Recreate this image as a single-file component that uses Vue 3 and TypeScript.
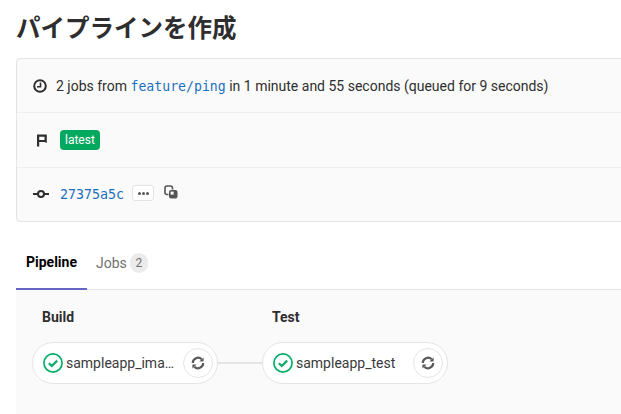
<script setup lang="ts">
interface Job { stage: string; name: string }
const jobs: Job[] = [
  { stage: 'Build', name: 'sampleapp_ima…' },
  { stage: 'Test', name: 'sampleapp_test' },
]
</script>

<template>
  <div class="page">
    <h1 class="title">パイプラインを作成</h1>
    <section class="card">
      <div class="row">
        <svg class="icon clock" viewBox="0 0 14 14" width="14" height="14"><circle cx="7" cy="7" r="5.800" fill="none" stroke="#2e2e2e" stroke-width="2"/><path d="M7.500 3.500V7.800H4" fill="none" stroke="#2e2e2e" stroke-width="1.600"/></svg>
        <span class="text">2 jobs from <code class="link">feature/ping</code> in 1 minute and 55 seconds (queued for 9 seconds)</span>
      </div>
      <div class="row">
        <svg class="icon flag" viewBox="0 0 14 14" width="14" height="14"><path d="M4 13.500V1.500H13.800V10L11.500 9H6.200V13.500z M6.200 3.800V6.900H11.500V3.800z" fill="#2e2e2e" fill-rule="evenodd"/></svg>
        <span class="badge">latest</span>
      </div>
      <div class="row commit">
        <svg class="icon wide" viewBox="0 0 16 16" width="16" height="16"><circle cx="8" cy="8" r="3" fill="none" stroke="#2e2e2e" stroke-width="2"/><path d="M0 8h5M11 8h5" stroke="#2e2e2e" stroke-width="2"/></svg>
        <code class="link sha">27375a5c</code>
        <span class="dots"><i></i><i></i><i></i></span>
        <svg class="copy" viewBox="0 0 14 14" width="14" height="14"><path d="M4.500 9.500H3A2 2 0 0 1 1 7.500V3A2 2 0 0 1 3 1h3.500a2 2 0 0 1 2 2v1.500" fill="none" stroke="#555" stroke-width="1.600"/><rect x="5" y="5" width="8.500" height="8.500" rx="2" fill="#555"/><rect x="6.600" y="6.600" width="3" height="3" fill="#fafafa"/></svg>
      </div>
    </section>
    <nav class="tabs">
      <div class="tab active">Pipeline</div>
      <div class="tab">Jobs <span class="count">2</span></div>
    </nav>
    <section class="graph">
      <div v-for="(job, i) in jobs" :key="job.stage" class="stage">
        <div class="stage-name">{{ job.stage }}</div>
        <div class="job-line">
          <div class="job">
            <svg class="status" viewBox="0 0 20 20" width="20" height="20"><circle cx="10" cy="10" r="9.100" fill="#fff" stroke="#08ad68" stroke-width="1.700"/><path d="M5.800 10.200l3 2.800 5.400-5.400" fill="none" stroke="#08ad68" stroke-width="2.200"/></svg>
            <span class="job-name">{{ job.name }}</span>
            <span class="retry">
              <svg viewBox="0 0 14 14" width="14" height="14"><path d="M1.800 7A5.200 5.200 0 0 1 10.700 3.300M12.200 7A5.200 5.200 0 0 1 3.300 10.700" fill="none" stroke="#5a5a5a" stroke-width="2.200"/><path d="M12.600 1.400V5.600H8.400zM1.400 12.600V8.400H5.600z" fill="#5a5a5a"/></svg>
            </span>
          </div>
          <div v-if="i < jobs.length - 1" class="connector"></div>
        </div>
      </div>
    </section>
  </div>
</template>

<style scoped>
.page {
  width: 621px;
  height: 414px;
  overflow: hidden;
  background: #fff;
  color: #2e2e2e;
  font-family: Roboto, "Noto Sans CJK JP", sans-serif;
  font-size: 14px;
  box-sizing: border-box;
  padding-left: 16px;
}
.title {
  margin: 0;
  height: 58px;
  box-sizing: border-box;
  padding-top: 12px;
  font-size: 24.500px;
  line-height: 34px;
  font-weight: 700;
  color: #2e2e2e;
  font-family: Roboto, "Noto Sans CJK JP", sans-serif;
}
.card {
  width: 640px;
  height: 164px;
  box-sizing: border-box;
  background: #fafafa;
  border: 1px solid #e5e5e5;
  border-radius: 4px;
  display: flex;
  flex-direction: column;
}
.row {
  flex: 1;
  display: flex;
  align-items: center;
  padding-left: 15px;
  border-bottom: 1px solid #eee;
}
.row:last-child { border-bottom: 0; }
.icon { flex: none; margin-left: 1px; }
.clock { margin-right: 9px; }
.flag { margin-right: 13px; }
.wide { margin-right: 11px; }
.text { font-size: 14px; white-space: nowrap; }
.link {
  font-family: "DejaVu Sans Mono", monospace;
  font-size: 13.200px;
  color: #1a70c0;
}
.sha { font-size: 13.300px; }
.badge {
  background: #05a85f;
  color: #fff;
  font-size: 12px;
  line-height: 20px;
  height: 20px;
  padding: 0 5px;
  border-radius: 4px;
  margin-top: 1px;
}
.dots {
  margin-left: 8px;
  width: 22px;
  height: 16px;
  box-sizing: border-box;
  border: 1px solid #e3e3e3;
  border-radius: 3px;
  background: #fff;
  display: flex;
  align-items: center;
  justify-content: center;
  gap: 1px;
  position: relative;
  top: -1px;
}
.dots i { width: 3px; height: 3px; border-radius: 50%; background: #555; }
.copy { margin-left: 10px; position: relative; top: -2px; }
.tabs {
  margin-top: 13px;
  height: 55px;
  box-sizing: border-box;
  width: 640px;
  display: flex;
  border-bottom: 1px solid #e5e5e5;
}
.tab {
  padding: 0 9px;
  height: 55px;
  box-sizing: border-box;
  display: flex;
  align-items: center;
  gap: 3px;
  color: #707070;
  white-space: nowrap;
}
.tab.active {
  width: 71px;
  font-weight: 700;
  color: #000;
  border-bottom: 2px solid #6666c4;
  padding: 0 9px 0 10px;
}
.count {
  width: 18px;
  height: 20px;
  border-radius: 10px;
  background: #ebebeb;
  color: #707070;
  font-size: 12px;
  display: flex;
  align-items: center;
  justify-content: center;
}
.graph {
  width: 640px;
  height: 124px;
  background: #fafafa;
  display: flex;
  padding-left: 16px;
  box-sizing: border-box;
}
.stage { display: flex; flex-direction: column; }
.stage-name {
  font-weight: 700;
  margin-top: 18px;
  margin-left: 10px;
  line-height: 18px;
  color: #2e2e2e;
}
.job-line { display: flex; align-items: center; margin-top: 16px; }
.job {
  width: 186px;
  height: 42px;
  box-sizing: border-box;
  background: #fff;
  border: 1px solid #e5e5e5;
  border-radius: 21px;
  display: flex;
  align-items: center;
  padding: 0 4px 0 10px;
}
.job-name {
  flex: 1;
  margin-left: 3px;
  white-space: nowrap;
  color: #3a3a3a;
}
.status { flex: none; }
.retry {
  width: 30px;
  height: 30px;
  box-sizing: border-box;
  border: 1px solid #e5e5e5;
  border-radius: 50%;
  background: #fff;
  display: flex;
  align-items: center;
  justify-content: center;
}
.connector { width: 44px; height: 2px; background: #e5e5e5; }
</style>

<style>
html, body { margin: 0; overflow: hidden; }
</style>
